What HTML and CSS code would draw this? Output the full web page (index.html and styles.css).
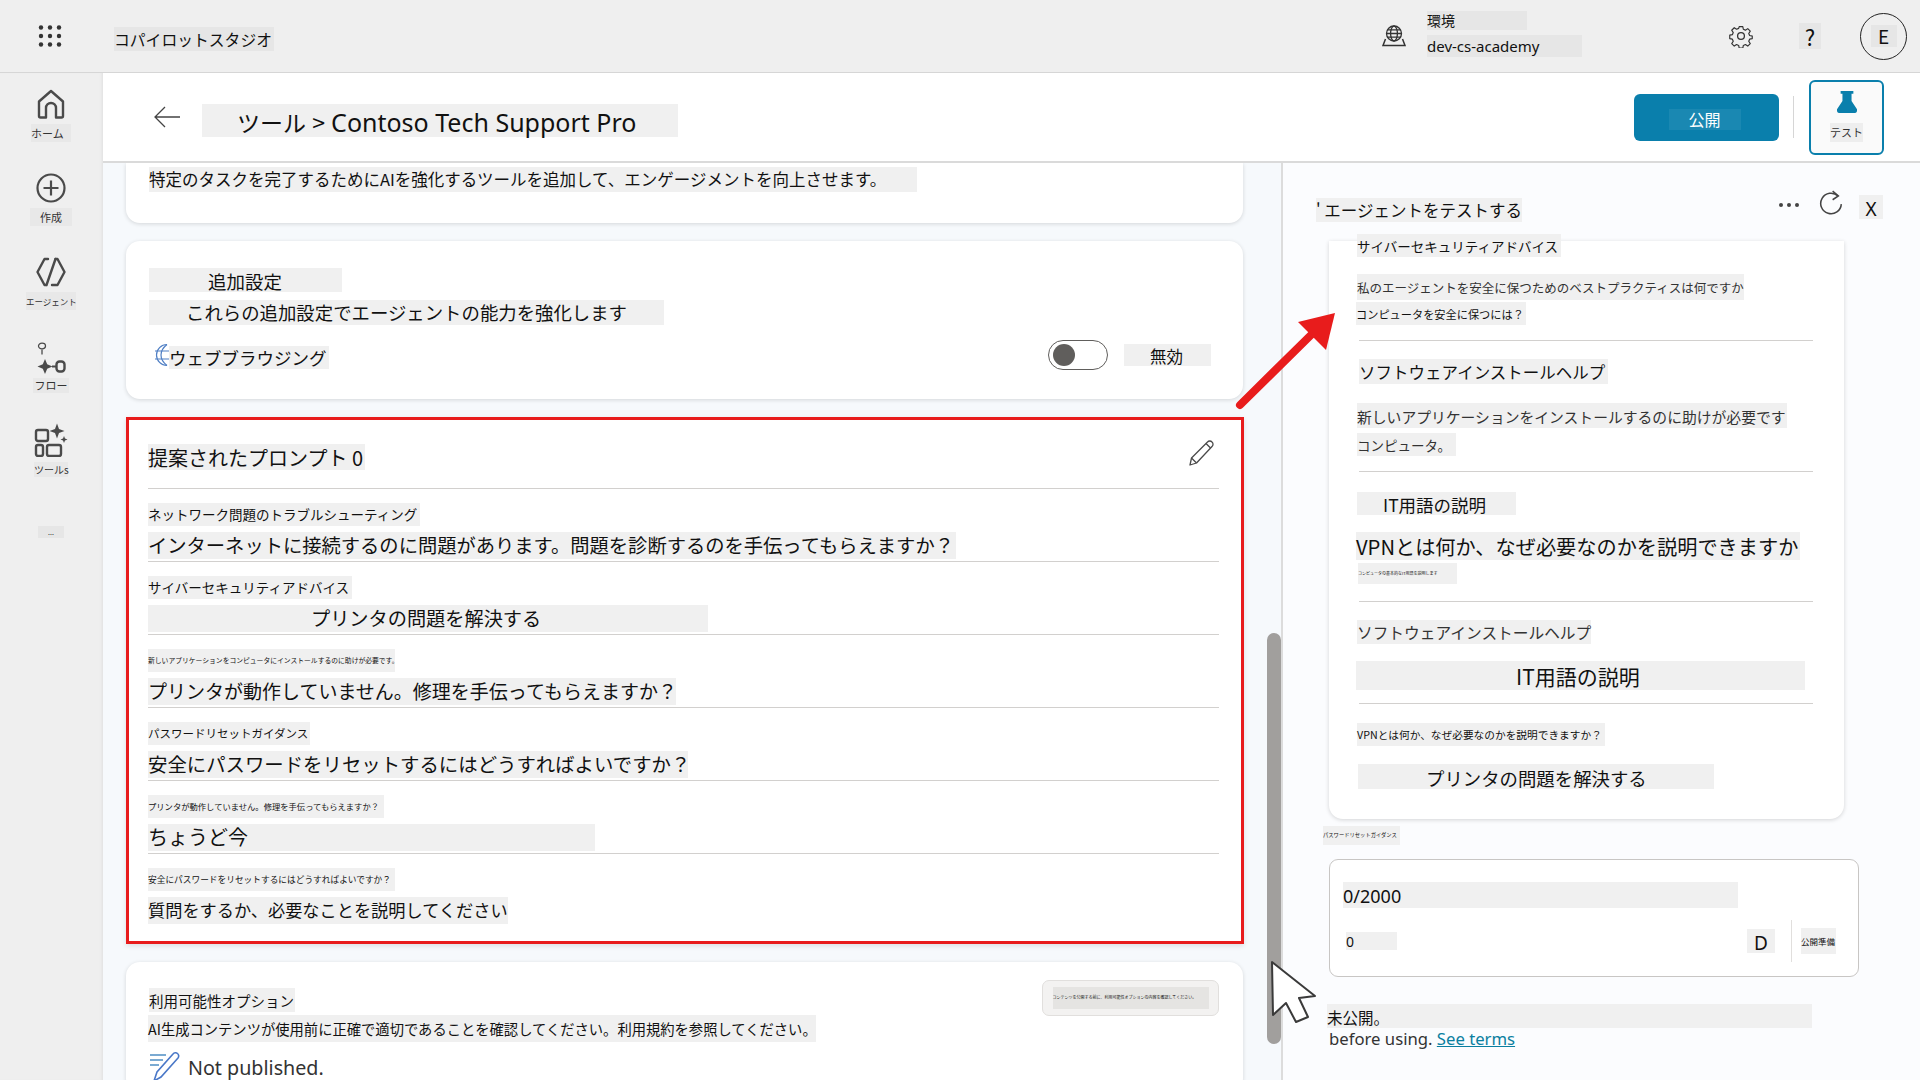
FILE: index.html
```html
<!DOCTYPE html>
<html lang="ja">
<head>
  <meta charset="UTF-8">
  <title>コパイロットスタジオ</title>
  <meta name="viewport" content="width=device-width, initial-scale=1.0">
  <link rel="stylesheet" href="styles.css">
</head>
<body>

  <header class="topbar">
    <svg class="waffle" width="24" height="22" viewBox="0 0 24 22">
      <g fill="#333">
        <circle cx="3" cy="2.5" r="2.2"/><circle cx="12" cy="2.5" r="2.2"/><circle cx="21" cy="2.5" r="2.2"/>
        <circle cx="3" cy="11" r="2.2"/><circle cx="12" cy="11" r="2.2"/><circle cx="21" cy="11" r="2.2"/>
        <circle cx="3" cy="19.5" r="2.2"/><circle cx="12" cy="19.5" r="2.2"/><circle cx="21" cy="19.5" r="2.2"/>
      </g>
    </svg>
    <span class="hl app-name">コパイロットスタジオ</span>

    <svg class="env-icon" width="24" height="22" viewBox="0 0 24 22" fill="none" stroke="#333" stroke-width="1.3">
      <circle cx="12" cy="8.5" r="7.5"/>
      <ellipse cx="12" cy="8.5" rx="3.4" ry="7.5"/>
      <path d="M4.5 8.5h15M5.5 4.8h13M5.5 12.2h13"/>
      <path d="M3.5 14 1 20.5h22L20.500 14" stroke-width="1.5"/>
    </svg>
    <div class="env">
      <span class="hl env-label">環境</span>
      <span class="hl env-name">dev-cs-academy</span>
    </div>

    <svg class="gear" width="24" height="24" viewBox="0 0 24 24" fill="none" stroke="#333" stroke-width="1.3" stroke-linejoin="round">
      <circle cx="12" cy="12" r="3.4"/>
      <path d="M10 1.500h4l.6 3 2.300 1 2.600-1.700 2.800 2.800-1.700 2.600 1 2.300 3 .6v0l-.1 0v2.800l-2.900.6-1 2.300 1.700 2.600-2.800 2.800-2.600-1.700-2.300 1-.6 3h-4l-.6-3-2.300-1-2.600 1.700-2.800-2.800 1.700-2.600-1-2.300-2.900-.6v-3.800l2.900-.6 1-2.300-1.700-2.600 2.800-2.800 2.600 1.700 2.300-1z" transform="translate(1.200 1.200) scale(.9)"/>
    </svg>
    <span class="hl help">?</span>
    <div class="avatar"><span class="hl avatar-letter">E</span></div>
  </header>

  <div class="shell">
    <nav class="sidebar">
      <div class="nav-item">
        <svg width="30" height="30" viewBox="0 0 30 30" fill="none" stroke="#4a4a4a" stroke-width="2.400" stroke-linejoin="round">
          <path d="M15 2 3 12.500V27a1.500 1.500 0 0 0 1.500 1.500H10V19a5 5 0 0 1 10 0v9.500h5.500A1.500 1.500 0 0 0 27 27V12.500z"/>
        </svg>
        <span class="hl nav-label nav-home">ホーム</span>
      </div>
      <div class="nav-item">
        <svg width="30" height="30" viewBox="0 0 30 30" fill="none" stroke="#4a4a4a" stroke-width="2.200">
          <circle cx="15" cy="15" r="13.500"/>
          <path d="M15 7.500v15M7.500 15h15"/>
        </svg>
        <span class="hl nav-label nav-create">作成</span>
      </div>
      <div class="nav-item">
        <svg width="30" height="30" viewBox="0 0 30 30" fill="none" stroke="#4a4a4a" stroke-width="2.400" stroke-linejoin="round" stroke-linecap="round">
          <path d="M12 2H8.500L1.500 15l7 13H10"/>
          <path d="M19.500 2 10.500 28"/>
          <path d="M19.500 2h2l7 13-7 13H16"/>
        </svg>
        <span class="hl nav-label nav-agents">エージェント</span>
      </div>
      <div class="nav-item nav-flow">
        <svg width="30" height="36" viewBox="0 0 30 36" fill="none" stroke="#4a4a4a">
          <ellipse cx="6" cy="5" rx="3.500" ry="2.800" stroke-width="1.300"/>
          <path d="M6 8.500v5" stroke-width="1.300"/>
          <path d="M9 18l2.200 5.300 5.300 2.200-5.300 2.200L9 33l-2.200-5.300L1.500 25.500l5.300-2.200z" fill="#4a4a4a" stroke="none"/>
          <path d="M16 25.500h4" stroke-width="2"/>
          <rect x="20.500" y="20.500" width="8" height="10" rx="3" stroke-width="2.400"/>
        </svg>
        <span class="hl nav-label nav-flow-label">フロー</span>
      </div>
      <div class="nav-item nav-tools">
        <svg width="34" height="34" viewBox="0 0 34 34" fill="none" stroke="#4a4a4a" stroke-width="2.400">
          <rect x="2" y="7" width="12" height="11" rx="2"/>
          <rect x="2" y="22" width="7" height="11" rx="2"/>
          <rect x="13" y="22" width="14" height="11" rx="2"/>
          <path d="M23 .5l2 5.500 5.500 2-5.500 2-2 5.500-2-5.500-5.500-2 5.500-2z" fill="#4a4a4a" stroke="none"/>
          <path d="M30 13l1 2.500 2.500 1-2.500 1-1 2.500-1-2.500-2.500-1 2.500-1z" fill="#4a4a4a" stroke="none"/>
        </svg>
        <span class="hl nav-label nav-tools-label">ツールs</span>
      </div>
      <span class="hl nav-more">...</span>
    </nav>

    <div class="workspace">
      <div class="page-head">
        <svg class="back" width="26" height="22" viewBox="0 0 26 22" fill="none" stroke="#444" stroke-width="1.300">
          <path d="M26 11H1M11 1 1 11l10 10"/>
        </svg>
        <span class="hl page-title">ツール &gt; <span class="title-en">Contoso Tech Support Pro</span></span>
        <button class="publish"><span class="publish-text">公開</span></button>
        <span class="head-sep"></span>
        <button class="test-btn">
          <svg width="20" height="22" viewBox="0 0 22 24" fill="#0a7fac">
            <path d="M4 0h14v3h-2v8l6 9v2a2 2 0 0 1-2 2H2a2 2 0 0 1-2-2v-2l6-9V3H4z"/>
          </svg>
          <span class="hl test-label">テスト</span>
        </button>
      </div>

      <div class="content">
        <main class="left-col">
          <section class="card card-tools">
            <span class="hl tools-desc">特定のタスクを完了するためにAIを強化するツールを追加して、エンゲージメントを向上させます。</span>
          </section>

          <section class="card card-extra">
            <span class="hl extra-title">追加設定</span>
            <span class="hl extra-desc">これらの追加設定でエージェントの能力を強化します</span>
            <div class="web-row">
              <svg class="web-icon" width="18" height="24" viewBox="0 0 18 24" fill="none" stroke="#4f7fc4" stroke-width="1.200">
                <path d="M14 1.500A10.500 10.500 0 0 0 14 22.500"/>
                <path d="M14 1.500C9.500 5 8 8.500 8 12s1.500 7 6 10.500"/>
                <path d="M2 8h15M2 16h15"/>
              </svg>
              <span class="hl web-label">ウェブブラウジング</span>
              <span class="toggle"><span class="toggle-knob"></span></span>
              <span class="hl toggle-label">無効</span>
            </div>
          </section>

          <section class="card-red">
            <div class="prompt-head">
              <span class="hl prompt-title">提案されたプロンプト 0</span>
              <svg class="pencil" width="25" height="26" viewBox="0 0 25 26" fill="none" stroke="#4a4a4a" stroke-width="1.300" stroke-linejoin="round">
                <path d="M1 25l1.500-7L18.500 2a3 3 0 0 1 4.500 0 3 3 0 0 1 0 4.500L7.500 23z"/>
                <path d="M2.500 18l5 5M17 3.500l4.500 4.500"/>
              </svg>
            </div>
            <div class="prompt-row">
              <span class="hl p-label p-label-1">ネットワーク問題のトラブルシューティング</span>
              <span class="hl p-body p-body-1">インターネットに接続するのに問題があります。問題を診断するのを手伝ってもらえますか？</span>
            </div>
            <div class="prompt-row">
              <span class="hl p-label p-label-2">サイバーセキュリティアドバイス</span>
              <span class="hl p-body p-body-2">プリンタの問題を解決する</span>
            </div>
            <div class="prompt-row">
              <span class="hl p-label p-label-3">新しいアプリケーションをコンピュータにインストールするのに助けが必要です。</span>
              <span class="hl p-body p-body-3">プリンタが動作していません。修理を手伝ってもらえますか？</span>
            </div>
            <div class="prompt-row">
              <span class="hl p-label p-label-4">パスワードリセットガイダンス</span>
              <span class="hl p-body p-body-4">安全にパスワードをリセットするにはどうすればよいですか？</span>
            </div>
            <div class="prompt-row">
              <span class="hl p-label p-label-5">プリンタが動作していません。修理を手伝ってもらえますか？</span>
              <span class="hl p-body p-body-5">ちょうど今</span>
            </div>
            <div class="prompt-row prompt-row-last">
              <span class="hl p-label p-label-6">安全にパスワードをリセットするにはどうすればよいですか？</span>
              <span class="hl p-body p-body-6">質問をするか、必要なことを説明してください</span>
            </div>
          </section>

          <section class="card card-avail">
            <div class="avail-chip"><span class="avail-chip-text">コンテンツを公開する前に、利用可能性オプションの内容を確認してください。</span></div>
            <span class="hl avail-title">利用可能性オプション</span>
            <span class="hl avail-desc">AI生成コンテンツが使用前に正確で適切であることを確認してください。利用規約を参照してください。</span>
            <div class="avail-status">
              <svg width="32" height="30" viewBox="0 0 32 30" fill="none" stroke="#4f8fc4" stroke-width="1.600">
                <path d="M1 3h16M1 8h13M1 13h9"/>
                <path d="M5 29l3-9L24 2a3 3 0 0 1 5 4L12 25z" stroke="#4a78c8"/>
              </svg>
              <span>Not published.</span>
            </div>
          </section>

          <div class="scroll-thumb"></div>
        </main>

        <aside class="right-col">
          <div class="test-head">
            <span class="hl test-title">' エージェントをテストする</span>
            <span class="test-dots"><i></i><i></i><i></i></span>
            <svg class="refresh" width="24" height="26" viewBox="0 0 22 24" fill="none" stroke="#444" stroke-width="1.400">
              <path d="M17.500 5.500A9.500 9.500 0 1 0 20.500 13"/>
              <path d="M12.500 1l5.300 4.500-5.300 3.500"/>
            </svg>
            <span class="hl test-close">X</span>
          </div>

          <div class="chat-card">
            <div class="chat-sec sec-1">
              <span class="hl c-a1">サイバーセキュリティアドバイス</span>
              <span class="hl c-a2">私のエージェントを安全に保つためのベストプラクティスは何ですか</span>
              <span class="hl c-a3">コンピュータを安全に保つには？</span>
            </div>
            <div class="chat-sec sec-2">
              <span class="hl c-b1">ソフトウェアインストールヘルプ</span>
              <span class="hl c-b2">新しいアプリケーションをインストールするのに助けが必要です</span>
              <span class="hl c-b3">コンピュータ。</span>
            </div>
            <div class="chat-sec sec-3">
              <span class="hl c-c1">IT用語の説明</span>
              <span class="hl c-c2">VPNとは何か、なぜ必要なのかを説明できますか</span>
              <span class="hl c-c3">コンピュータの基本的なIT用語を説明します</span>
            </div>
            <div class="chat-sec sec-4">
              <span class="hl c-d1">ソフトウェアインストールヘルプ</span>
              <span class="hl c-d2">IT用語の説明</span>
            </div>
            <div class="chat-sec sec-5">
              <span class="hl c-e1">VPNとは何か、なぜ必要なのかを説明できますか？</span>
              <span class="hl c-e2">プリンタの問題を解決する</span>
            </div>
          </div>

          <span class="hl tiny-label">パスワードリセットガイダンス</span>

          <div class="input-box">
            <span class="hl count">0/2000</span>
            <div class="input-foot">
              <span class="hl zero">0</span>
              <span class="hl letter-d">D</span>
              <span class="foot-sep"></span>
              <span class="hl foot-note">公開準備</span>
            </div>
          </div>

          <span class="hl unpublished">未公開。</span>
          <p class="terms">before using. <a href="#">See terms</a></p>
        </aside>
      </div>
    </div>
  </div>

  <!-- annotations drawn over the screenshot -->
  <svg class="overlay" width="1920" height="1080" viewBox="0 0 1920 1080">
    <path d="M1240 405 1312 334" stroke="#e81c1c" stroke-width="8" stroke-linecap="round" fill="none"/>
    <path d="M1335 313 1326 350 1298 322z" fill="#e81c1c"/>
    <path d="M1272 962 1273 1015 1286 1003 1296 1022 1308 1017 1299 998 1315 996z" fill="#fff" stroke="#3a3a3a" stroke-width="2" stroke-linejoin="round"/>
  </svg>

</body>
</html>
```

FILE: styles.css
```css
* {
  box-sizing: border-box;
}

html, body {
  margin: 0;
  height: 1080px;
  overflow: hidden;
}

body {
  position: relative;
  font-family: "Noto Sans", "Noto Sans CJK JP", sans-serif;
  color: #111;
  background-color: #efefef;
}

/* grey band behind the translated strings */
.hl {
  display: block;
  background-color: #f0f0f0;
  white-space: nowrap;
  font-family: "Noto Sans CJK JP", "Noto Sans", sans-serif;
}

/* top bar */
.topbar {
  display: flex;
  align-items: center;
  height: 73px;
  padding-left: 38px;
  background-color: #efefef;
  border-bottom: 1px solid #d6d6d6;
}

.app-name {
  margin-left: 52px;
  margin-top: 5px;
  width: 160px;
  height: 24px;
  line-height: 26px;
  font-size: 15.800px;
  background-color: #e6e6e6;
}

.env-icon {
  margin-left: 1108px;
}

.env {
  display: flex;
  flex-direction: column;
  gap: 5px;
  margin-left: 21px;
  margin-top: -4px;
  width: 155px;
}

.env-label {
  width: 100px;
  height: 19px;
  line-height: 19px;
  font-size: 14px;
  background-color: #e6e6e6;
}

.env-name {
  height: 22px;
  line-height: 22px;
  font-size: 15px;
  font-family: "Noto Sans", sans-serif;
  background-color: #e6e6e6;
}

.gear {
  margin-left: 147px;
}

.help {
  margin-left: 46px;
  width: 22px;
  height: 26px;
  line-height: 26px;
  text-align: center;
  font-size: 22px;
  background-color: #e6e6e6;
}

.avatar {
  display: flex;
  align-items: center;
  justify-content: center;
  margin-left: 39px;
  width: 47px;
  height: 47px;
  border: 1px solid #222;
  border-radius: 50%;
}

.avatar-letter {
  width: 26px;
  height: 22px;
  line-height: 22px;
  text-align: center;
  font-size: 19px;
  background-color: #e6e6e6;
}

/* page shell */
.shell {
  display: flex;
  height: 1007px;
}

.sidebar {
  display: flex;
  flex-direction: column;
  align-items: center;
  flex: 0 0 103px;
  padding: 16px 1px 0 0;
  background-color: #efefef;
  box-shadow: inset -3px 0 3px -2px #e0e0e0;
}

.nav-item {
  display: flex;
  flex-direction: column;
  align-items: center;
  gap: 5px;
  height: 84px;
}

.nav-flow {
  gap: 1px;
  height: 82px;
}

.nav-tools {
  gap: 5px;
  height: 103px;
}

.nav-label {
  height: 18px;
  line-height: 18px;
  text-align: center;
  font-size: 11px;
  color: #333;
  background-color: #e8e8e8;
}

.nav-home { width: 40px; text-align: left; }
.nav-create { width: 42px; }
.nav-agents { width: 50px; font-size: 8.5px; }
.nav-flow-label { width: 36px; height: 15px; line-height: 15px; }
.nav-tools-label { width: 34px; font-size: 10px; height: 15px; line-height: 15px; }

.nav-more {
  width: 26px;
  height: 12px;
  line-height: 12px;
  text-align: center;
  font-size: 7px;
  background-color: #e6e6e6;
}

.workspace {
  display: flex;
  flex-direction: column;
  flex: 1;
  min-width: 0;
}

/* page header */
.page-head {
  display: flex;
  align-items: center;
  height: 90px;
  padding-left: 51px;
  background-color: #fff;
  border-bottom: 2px solid #dadada;
}

.back {
  flex: none;
}

.page-title {
  margin-left: 22px;
  margin-top: 6px;
  width: 476px;
  height: 33px;
  line-height: 36px;
  padding-left: 35px;
  font-size: 23px;
  word-spacing: 1px;
}

.title-en {
  font-size: 25px;
  font-family: "Noto Sans", sans-serif;
  word-spacing: 0;
}

.publish {
  display: flex;
  align-items: center;
  justify-content: center;
  margin-left: 956px;
  width: 145px;
  height: 47px;
  border: none;
  border-radius: 6px;
  background-color: #0a7fac;
}

.publish-text {
  margin-right: 4px;
  margin-top: 4px;
  width: 72px;
  height: 21px;
  line-height: 21px;
  text-align: center;
  color: #fff;
  font-size: 16px;
  font-family: "Noto Sans CJK JP", sans-serif;
  background-color: #1a88b2;
}

.head-sep {
  margin-left: 14px;
  width: 1px;
  height: 42px;
  background-color: #d6d6d6;
}

.test-btn {
  display: flex;
  flex-direction: column;
  align-items: center;
  gap: 10px;
  margin-left: 15px;
  padding: 9px 0 0;
  width: 75px;
  height: 75px;
  border: 2px solid #0a7fac;
  border-radius: 6px;
  background-color: #fafafa;
}

.test-label {
  width: 33px;
  height: 19px;
  line-height: 19px;
  font-size: 11px;
  color: #333;
  background-color: #eeeeee;
}

.content {
  display: flex;
  flex: 1;
  min-height: 0;
}

/* left column */
.left-col {
  position: relative;
  flex: 0 0 1180px;
  padding-left: 23px;
  overflow: hidden;
  background-color: #f6f9fc;
  border-right: 2px solid #dcdcdc;
}

.card {
  width: 1117px;
  padding-left: 23px;
  background-color: #fff;
  border-radius: 14px;
  box-shadow: 0 1px 4px rgba(0, 0, 0, 0.14);
}

.card-tools {
  height: 60px;
  padding-top: 4px;
  border-radius: 0 0 14px 14px;
}

.tools-desc {
  width: 768px;
  height: 25px;
  line-height: 25px;
  font-size: 16.500px;
}

.card-extra {
  margin-top: 18px;
  height: 158px;
  padding-top: 27px;
}

.extra-title {
  width: 193px;
  height: 24px;
  line-height: 26px;
  padding-left: 59px;
  font-size: 18.500px;
}

.extra-desc {
  margin-top: 8px;
  width: 515px;
  height: 25px;
  line-height: 25px;
  padding-left: 37px;
  font-size: 18.400px;
}

.web-row {
  display: flex;
  align-items: center;
  margin-top: 15px;
  height: 30px;
}

.web-icon {
  flex: none;
  margin-left: 4px;
  margin-right: -2px;
}

.web-label {
  margin-top: 4px;
  width: 160px;
  height: 23px;
  line-height: 24px;
  font-size: 17.500px;
}

.toggle {
  display: flex;
  align-items: center;
  margin-left: 719px;
  padding-left: 4px;
  width: 60px;
  height: 30px;
  border: 1px solid #605e5c;
  border-radius: 15px;
  background-color: #fff;
}

.toggle-knob {
  width: 22px;
  height: 22px;
  border-radius: 50%;
  background-color: #605e5c;
}

.toggle-label {
  margin-left: 16px;
  width: 87px;
  height: 22px;
  line-height: 25px;
  padding-left: 26px;
  font-size: 16.500px;
}

/* highlighted prompts card */
.card-red {
  margin-top: 18px;
  width: 1118px;
  height: 527px;
  padding: 0 22px 0 19px;
  background-color: #fff;
  border: 3px solid #e81c1c;
  box-shadow: 0 2px 5px rgba(0, 0, 0, 0.1);
}

.prompt-head {
  display: flex;
  align-items: center;
  justify-content: space-between;
  height: 69px;
  padding: 0 5px 0 0;
  border-bottom: 1px solid #d2d0ce;
}

.prompt-title {
  margin-top: 6px;
  width: 217px;
  height: 26px;
  line-height: 28px;
  font-size: 20px;
}

.pencil {
  margin-top: -2px;
}

.prompt-row {
  height: 73px;
  padding-top: 14px;
  border-bottom: 1px solid #d2d0ce;
}

.prompt-row-last {
  border-bottom: none;
}

.p-label {
  height: 23px;
  line-height: 23px;
}

.p-body {
  margin-top: 6px;
  height: 27px;
  line-height: 26px;
}

.p-label-1 { width: 272px; font-size: 13.500px; }
.p-label-2 { width: 204px; font-size: 13.500px; }
.p-label-3 { width: 247px; font-size: 6.800px; }
.p-label-4 { width: 162px; font-size: 11.500px; }
.p-label-5 { width: 236px; font-size: 8.300px; }
.p-label-6 { width: 247px; font-size: 8.700px; }

.p-body-1 { width: 808px; font-size: 19.300px; }
.p-body-2 { width: 560px; padding-left: 163px; font-size: 19.200px; }
.p-body-3 { width: 528px; font-size: 19px; }
.p-body-4 { width: 540px; font-size: 19.400px; }
.p-body-5 { width: 447px; font-size: 20px; }
.p-body-6 { width: 360px; font-size: 17.200px; }

/* availability card */
.card-avail {
  position: relative;
  margin-top: 18px;
  height: 130px;
  padding-top: 26px;
}

.avail-chip {
  position: absolute;
  top: 18px;
  right: 24px;
  display: flex;
  align-items: center;
  justify-content: center;
  width: 177px;
  height: 36px;
  border: 1px solid #e1dfdd;
  border-radius: 7px;
  background-color: #f3f2f1;
}

.avail-chip-text {
  width: 156px;
  height: 22px;
  line-height: 22px;
  white-space: nowrap;
  font-size: 4px;
  background-color: #e5e4e2;
}

.avail-title {
  width: 146px;
  height: 24px;
  line-height: 26px;
  font-size: 14.500px;
}

.avail-desc {
  margin-top: 3px;
  margin-left: -1px;
  width: 668px;
  height: 27px;
  line-height: 28px;
  font-size: 14.300px;
}

.avail-status {
  display: flex;
  align-items: center;
  gap: 7px;
  margin-top: 10px;
  font-size: 19.700px;
  color: #333;
}

.scroll-thumb {
  position: absolute;
  top: 470px;
  left: 1164px;
  width: 14px;
  height: 411px;
  border-radius: 7px;
  background-color: #a19f9d;
}

/* right column */
.right-col {
  flex: 1;
  min-width: 0;
  padding-left: 46px;
  background-color: #fbfcfe;
}

.test-head {
  display: flex;
  align-items: center;
  height: 71px;
  padding-top: 21px;
  margin-left: -13px;
}

.test-title {
  margin-top: 1px;
  width: 206px;
  height: 24px;
  line-height: 25px;
  font-size: 16.500px;
}

.test-dots {
  display: flex;
  gap: 4px;
  margin-left: 257px;
  margin-top: -9px;
}

.test-dots i {
  width: 4px;
  height: 4px;
  border-radius: 50%;
  background-color: #444;
}

.refresh {
  margin-left: 20px;
  margin-top: -13px;
}

.test-close {
  margin-left: 16px;
  margin-top: -5px;
  width: 24px;
  height: 24px;
  line-height: 28px;
  text-align: center;
  font-size: 19px;
  font-family: "Noto Sans", sans-serif;
}

.chat-card {
  display: flow-root;
  margin-top: 7px;
  width: 515px;
  height: 578px;
  padding: 0 31px 0 30px;
  background-color: #fff;
  border-radius: 0 0 14px 14px;
  box-shadow: 0 1px 4px rgba(0, 0, 0, 0.16);
}

.chat-sec {
  display: flow-root;
  border-bottom: 1px solid #d2d0ce;
}

.sec-1 { height: 100px; }
.sec-2 { height: 131px; padding-top: 18px; }
.sec-3 { height: 130px; padding-top: 20px; }
.sec-4 { height: 102px; padding-top: 18px; }
.sec-5 { height: 115px; padding-top: 19px; border-bottom: none; }

.c-a1 { margin-top: -7px; margin-left: -2px; width: 204px; height: 23px; line-height: 25px; font-size: 13.500px; }
.c-a2 { margin-top: 17px; margin-left: -2px; width: 387px; height: 26px; line-height: 27px; font-size: 12.500px; color: #333; }
.c-a3 { margin-top: 2px; margin-left: -3px; width: 170px; height: 23px; line-height: 24px; font-size: 11.200px; }

.c-b1 { width: 249px; height: 25px; line-height: 27px; font-size: 16.500px; }
.c-b2 { margin-top: 19px; margin-left: -2px; width: 430px; height: 25px; line-height: 27px; font-size: 14.800px; color: #333; }
.c-b3 { margin-top: 5px; margin-left: -2px; width: 99px; height: 23px; line-height: 24px; font-size: 13.500px; color: #333; }

.c-c1 { margin-left: -2px; width: 159px; height: 23px; line-height: 25px; padding-left: 26px; font-size: 17.500px; }
.c-c2 { margin-top: 17px; margin-left: -3px; width: 444px; height: 28px; line-height: 29px; font-size: 20.200px; }
.c-c3 { margin-top: 3px; margin-left: -1px; width: 99px; height: 21px; line-height: 21px; font-size: 4px; }

.c-d1 { margin-left: -2px; width: 234px; height: 24px; line-height: 26px; font-size: 15.700px; color: #333; }
.c-d2 { margin-top: 17px; margin-left: -3px; width: 449px; height: 29px; line-height: 31px; padding-left: 160px; font-size: 21px; }

.c-e1 { margin-left: -2px; width: 248px; height: 23px; line-height: 24px; font-size: 10.700px; }
.c-e2 { margin-top: 18px; margin-left: -1px; width: 356px; height: 25px; line-height: 28px; padding-left: 68px; font-size: 18.400px; }

.tiny-label {
  margin-top: 7px;
  margin-left: -6px;
  width: 77px;
  height: 19px;
  line-height: 19px;
  font-size: 5.300px;
}

.input-box {
  margin-top: 14px;
  width: 530px;
  height: 118px;
  padding: 22px 0 0 13px;
  background-color: #fff;
  border: 1px solid #c8c6c4;
  border-radius: 9px;
}

.count {
  width: 395px;
  height: 26px;
  line-height: 28px;
  font-size: 18px;
  font-family: "Noto Sans", sans-serif;
}

.input-foot {
  display: flex;
  align-items: center;
  margin-top: 12px;
  height: 42px;
}

.zero {
  margin-left: 3px;
  width: 51px;
  height: 18px;
  line-height: 20px;
  font-size: 14px;
  font-family: "Noto Sans", sans-serif;
}

.letter-d {
  margin-left: 350px;
  width: 28px;
  height: 24px;
  line-height: 28px;
  text-align: center;
  font-size: 19px;
  font-family: "Noto Sans", sans-serif;
}

.foot-sep {
  margin-left: 16px;
  width: 1px;
  height: 42px;
  background-color: #e1dfdd;
}

.foot-note {
  margin-left: 9px;
  width: 35px;
  height: 26px;
  line-height: 26px;
  font-size: 8.500px;
}

.unpublished {
  margin-top: 27px;
  margin-left: -2px;
  width: 485px;
  height: 24px;
  line-height: 27px;
  font-size: 15.500px;
}

.terms {
  margin: 0;
  height: 24px;
  line-height: 22px;
  font-size: 16.700px;
  color: #333;
}

.terms a {
  color: #0a7fa0;
}

.overlay {
  position: absolute;
  top: 0;
  left: 0;
  pointer-events: none;
}
```
